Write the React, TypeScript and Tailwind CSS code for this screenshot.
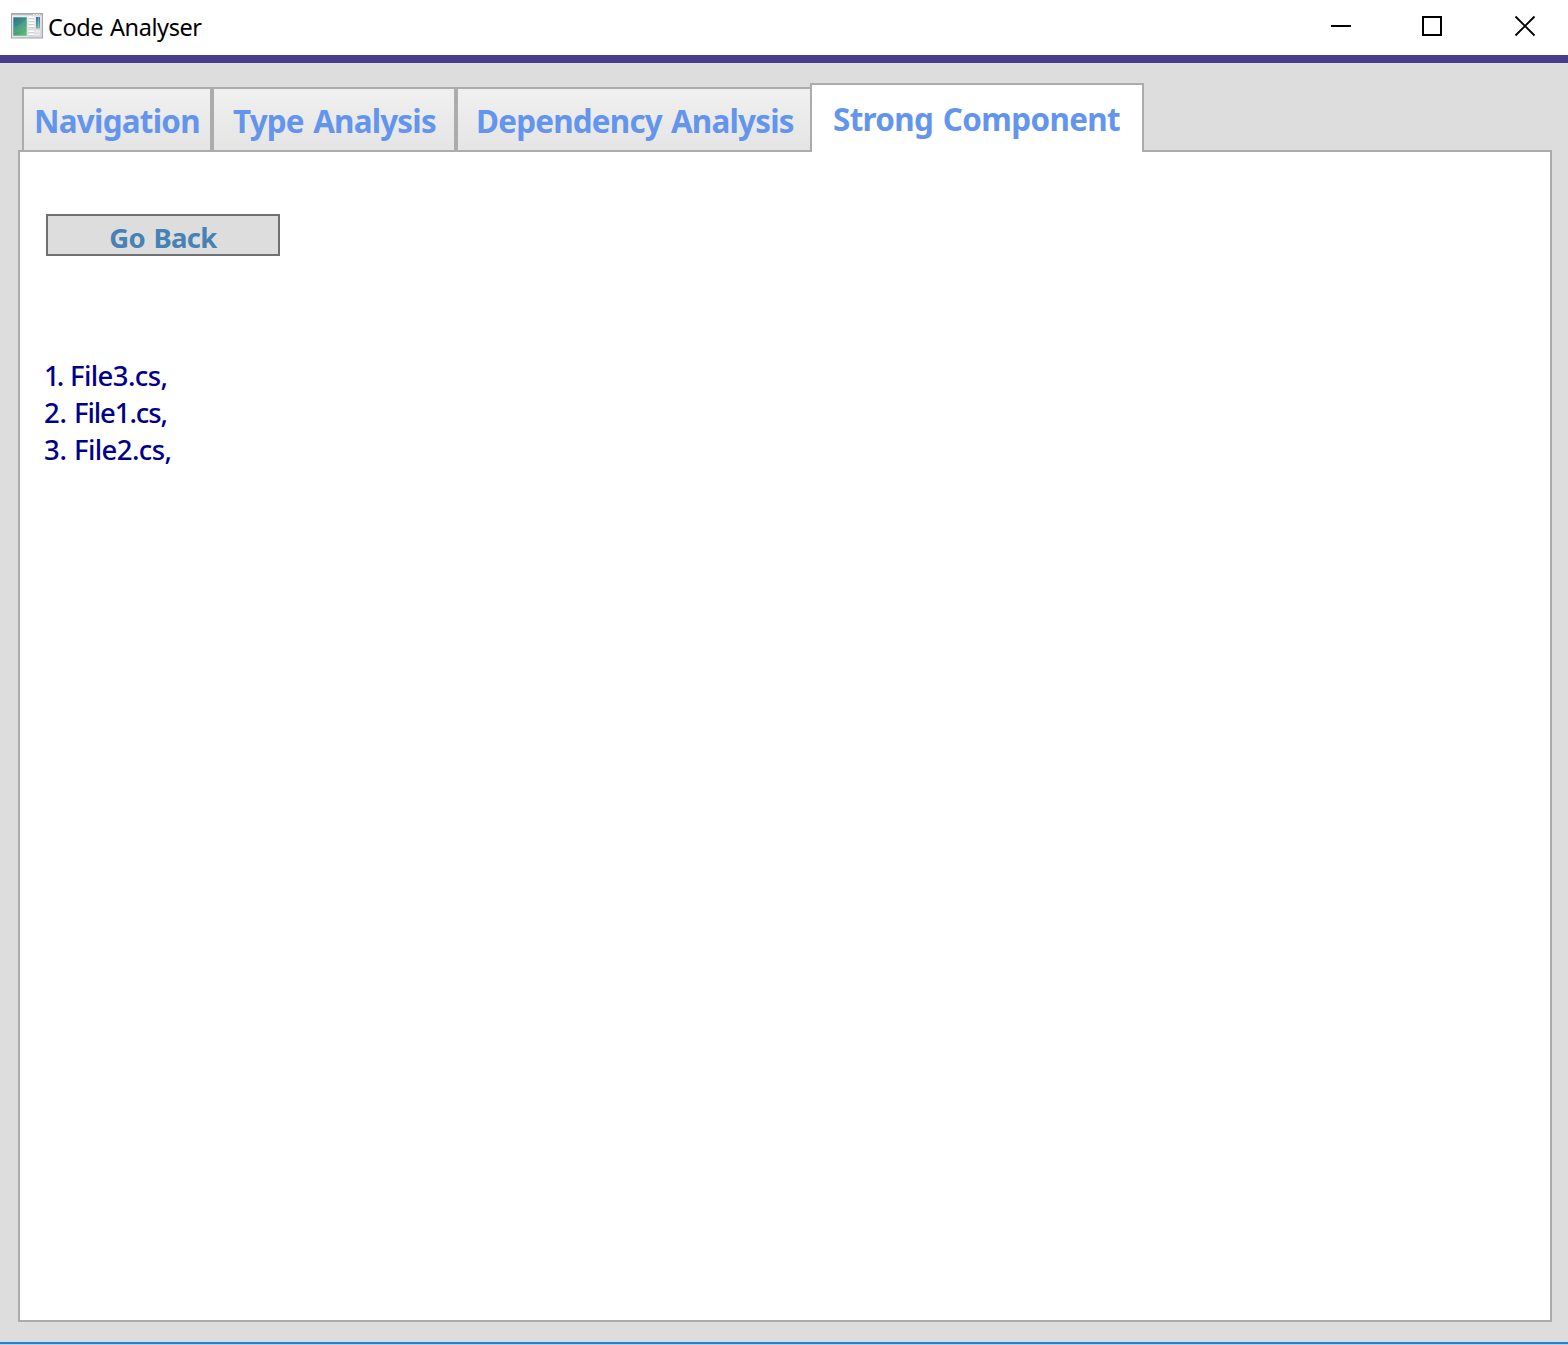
const tabs = [
  { label: 'Navigation', box: 'w-[190px] border-r-2 pl-[10px]', text: 'tracking-[-0.75px]' },
  { label: 'Type Analysis', box: 'w-[244px] border-r-2 pl-[19px]', text: 'tracking-[-0.8px] [word-spacing:2px]' },
  { label: 'Dependency Analysis', box: 'w-[354px] pl-[18px]', text: 'tracking-[-0.78px] [word-spacing:1.5px]' },
];

const files = [
  { number: '1. ', name: 'File3.cs,', numberStyle: 'w-[26px] tracking-[-3px] [word-spacing:4px]', nameStyle: 'tracking-[-0.6px]' },
  { number: '2. ', name: 'File1.cs,', numberStyle: 'w-[30px] tracking-[-0.3px]', nameStyle: 'tracking-[-1.1px]' },
  { number: '3. ', name: 'File2.cs,', numberStyle: 'w-[30px] tracking-[-0.3px]', nameStyle: 'tracking-[-0.6px]' },
];

function AppIcon() {
  return (
    <svg width="32" height="26" viewBox="0 0 32 26" aria-hidden="true">
      <defs>
        <linearGradient id="pane" x1="0" y1="0" x2="0.7" y2="1">
          <stop offset="0" stopColor="#2f6f9c" />
          <stop offset="0.5" stopColor="#3c9180" />
          <stop offset="1" stopColor="#62b777" />
        </linearGradient>
        <linearGradient id="side" x1="0" y1="0" x2="0" y2="1">
          <stop offset="0" stopColor="#356fa6" />
          <stop offset="1" stopColor="#6dbb95" />
        </linearGradient>
        <linearGradient id="frame" x1="0" y1="0" x2="1" y2="1">
          <stop offset="0" stopColor="#f5f5f6" />
          <stop offset="1" stopColor="#d3d4d8" />
        </linearGradient>
      </defs>
      <rect x="0.5" y="0.5" width="31" height="24.5" fill="url(#frame)" stroke="#a3a5a8" />
      <path d="M1 1.5h30" stroke="#b4b8bd" strokeWidth="1.5" />
      <path d="M22 1.5h7" stroke="#e6e9ec" strokeDasharray="2 1" />
      <rect x="2" y="4" width="14" height="19" fill="url(#pane)" stroke="#dce9e9" strokeWidth="0.6" />
      <path d="M2.5 14C7 13 12 10 15.5 5v10c-4 3-8 4-13 5z" fill="#6dc28a" opacity="0.25" />
      <path d="M17.5 4.5h6M17.5 7.5h6M17.5 10.5h6M17.5 13.5h6M17.5 18.5h6M17.5 21.5h6" stroke="#fff" strokeWidth="2" />
      <path d="M17.5 5.5h5.5M17.5 8.5h5.5M17.5 11.5h5.5M17.5 14.5h5.5M17.5 19.5h5.5M17.5 22.5h5.5" stroke="#c5c7ca" strokeWidth="0.8" />
      <rect x="25" y="4" width="4" height="11.5" fill="url(#side)" />
      <path d="M27.6 4v11.5" stroke="#fff" strokeWidth="0.7" opacity="0.45" />
      <path d="M24.5 18.5h4.5M24.5 21.5h4.5" stroke="#ececef" strokeWidth="2" />
    </svg>
  );
}

export default function App() {
  return (
    <div className="flex h-[1345px] w-[1568px] flex-col overflow-hidden bg-[#dddddd] font-['Noto_Sans','Open_Sans',sans-serif]">
      <header className="flex h-[55px] shrink-0 items-start justify-between bg-white">
        <div className="flex pt-[13px] pl-[11px]">
          <AppIcon />
          <h1 className="-mt-px ml-[5px] text-[23.5px] leading-[30px] tracking-[-0.4px] [word-spacing:1px] whitespace-nowrap text-black">Code Analyser</h1>
        </div>
        <div className="flex gap-[70px] pt-[15px] pr-[32px]">
          <button aria-label="Minimize" className="h-[22px] w-[22px]">
            <svg width="22" height="22"><path d="M1 11h20" stroke="#000" strokeWidth="2" /></svg>
          </button>
          <button aria-label="Maximize" className="h-[22px] w-[22px]">
            <svg width="22" height="22"><rect x="1" y="2" width="18" height="18" fill="none" stroke="#000" strokeWidth="2" /></svg>
          </button>
          <button aria-label="Close" className="h-[22px] w-[22px]">
            <svg width="22" height="22"><path d="M1.5 1.5l19 19M20.5 1.5l-19 19" stroke="#000" strokeWidth="1.9" /></svg>
          </button>
        </div>
      </header>
      <div className="h-2 shrink-0 bg-[#483d8b]" />

      <main className="flex flex-1 flex-col pt-5 pr-4 pb-5 pl-[18px]">
        <nav className="flex h-[67px] shrink-0 items-end pl-1 text-[31.4px] leading-[44px] font-bold whitespace-nowrap text-[#6495ed]">
          {tabs.map((tab) => (
            <button key={tab.label} className={`h-[63px] border-t-2 border-l-2 border-[#acacac] bg-linear-to-b from-[#f0f0f0] to-[#e5e5e5] pt-[10px] pb-[7px] text-left ${tab.box}`}>
              <span className={tab.text}>{tab.label}</span>
            </button>
          ))}
          <button className="relative -mb-0.5 h-[69px] w-[334px] self-start border-2 border-b-0 border-[#acacac] bg-white pt-[7px] pb-[6px] pl-[21px] text-left">
            <span className="tracking-[-0.65px] [word-spacing:2px]">Strong Component</span>
          </button>
        </nav>
        <section className="flex-1 border-2 border-[#acacac] bg-white pt-[62px] pl-6">
          <button className="ml-0.5 flex h-[42px] w-[234px] items-center justify-center border-2 border-[#707070] bg-[#dddddd] pt-[6px] text-[27.5px] leading-[36px] font-bold whitespace-nowrap text-[#4682b4]">
            <span className="tracking-[-0.7px] [word-spacing:2px]">Go Back</span>
          </button>
          <ul className="mt-[101px] text-[27.5px] leading-[37px] font-medium text-[#00008b]">
            {files.map((file) => (
              <li key={file.number} className="flex whitespace-pre">
                <span className={file.numberStyle}>{file.number}</span>
                <span className={file.nameStyle}>{file.name}</span>
              </li>
            ))}
          </ul>
        </section>
      </main>
      <footer className="h-[3px] shrink-0 border-b border-[#c4cdd5] bg-[#1a83d7]" />
    </div>
  );
}
